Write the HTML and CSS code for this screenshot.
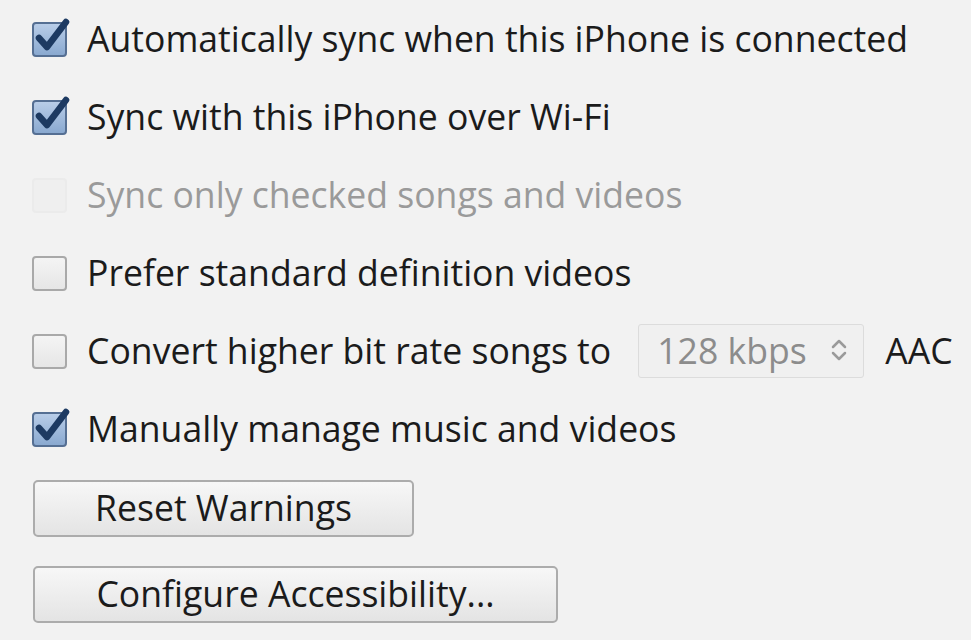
FILE: index.html
```html
<!DOCTYPE html>
<html>
<head>
<meta charset="utf-8">
<link rel="stylesheet" href="styles.css">
</head>
<body>
<div class="panel">
  <div class="row">
    <span class="box checked"><svg viewBox="0 0 40 40" width="40" height="40"><path class="tick" d="M9 20 L17 29 L36 4"/></svg></span>
    <span class="label">Automatically sync when this iPhone is connected</span>
  </div>
  <div class="row">
    <span class="box checked"><svg viewBox="0 0 40 40" width="40" height="40"><path class="tick" d="M9 20 L17 29 L36 4"/></svg></span>
    <span class="label">Sync with this iPhone over Wi-Fi</span>
  </div>
  <div class="row disabled">
    <span class="box off"></span>
    <span class="label">Sync only checked songs and videos</span>
  </div>
  <div class="row">
    <span class="box"></span>
    <span class="label">Prefer standard definition videos</span>
  </div>
  <div class="row">
    <span class="box"></span>
    <span class="label">Convert higher bit rate songs to</span>
    <span class="select">
      <span class="select-text">128 kbps</span>
      <svg class="chev" viewBox="0 0 20 24" width="20" height="24"><path d="M4 9 L10 3 L16 9 M4 15 L10 21 L16 15"/></svg>
    </span>
    <span class="label aac">AAC</span>
  </div>
  <div class="row">
    <span class="box checked"><svg viewBox="0 0 40 40" width="40" height="40"><path class="tick" d="M9 20 L17 29 L36 4"/></svg></span>
    <span class="label">Manually manage music and videos</span>
  </div>
  <div class="buttons">
    <button class="btn reset">Reset Warnings</button>
    <button class="btn access">Configure Accessibility...</button>
  </div>
</div>
</body>
</html>
```
FILE: styles.css
```css
html, body {
  margin: 0;
  padding: 0;
  background: #f2f2f2;
}
body {
  font-family: "Open Sans", "Noto Sans", sans-serif;
  color: #1b1b1b;
}
.panel {
  padding: 0 0 0 32px;
  width: 971px;
  height: 640px;
  box-sizing: border-box;
  overflow: hidden;
}
.row {
  display: flex;
  align-items: center;
  height: 78px;
}
.label {
  font-size: 35.6px;
  line-height: 44px;
  white-space: nowrap;
  margin-left: 20px;
  padding-bottom: 3px;
}
.disabled .label {
  color: #9a9a9a;
}
.box {
  position: relative;
  width: 35px;
  height: 35px;
  box-sizing: border-box;
  border: 2px solid #a9a9a9;
  border-radius: 4px;
  background: linear-gradient(#f4f4f4, #e6e6e6);
  flex: none;
}
.box.off {
  border-color: #ebebeb;
  background: #efefef;
}
.box.checked {
  border-color: #556f93;
  background: linear-gradient(#b8cde8, #8aa9d0);
}
.box svg {
  position: absolute;
  left: -4px;
  top: -6px;
  overflow: visible;
}
.tick {
  fill: none;
  stroke: #1d3a62;
  stroke-width: 6.5;
  stroke-linecap: round;
  stroke-linejoin: round;
}
.select {
  display: flex;
  align-items: center;
  justify-content: space-between;
  width: 226px;
  height: 54px;
  box-sizing: border-box;
  margin-left: 27px;
  padding: 0 14px 3px 18px;
  border: 1px solid #dcdcdc;
  border-radius: 3px;
  background: #f0f0f0;
  flex: none;
}
.select-text {
  font-size: 35.6px;
  color: #8c8c8c;
  white-space: nowrap;
}
.chev path {
  fill: none;
  stroke: #9a9a9a;
  stroke-width: 2.5;
  stroke-linecap: round;
  stroke-linejoin: round;
}
.aac {
  margin-left: 21px;
}
.buttons {
  display: flex;
  flex-direction: column;
  align-items: flex-start;
  gap: 29px;
  padding-top: 12px;
}
.btn {
  font-family: "Open Sans", "Noto Sans", sans-serif;
  font-size: 35.6px;
  color: #1b1b1b;
  height: 57px;
  box-sizing: border-box;
  border: 2px solid #acacac;
  border-radius: 5px;
  background: linear-gradient(#f7f7f7, #e4e4e4);
  padding: 0 0 3px 0;
  margin: 0;
}
.reset { width: 381px; margin-left: 1px; }
.access { width: 525px; margin-left: 1px; }
```
